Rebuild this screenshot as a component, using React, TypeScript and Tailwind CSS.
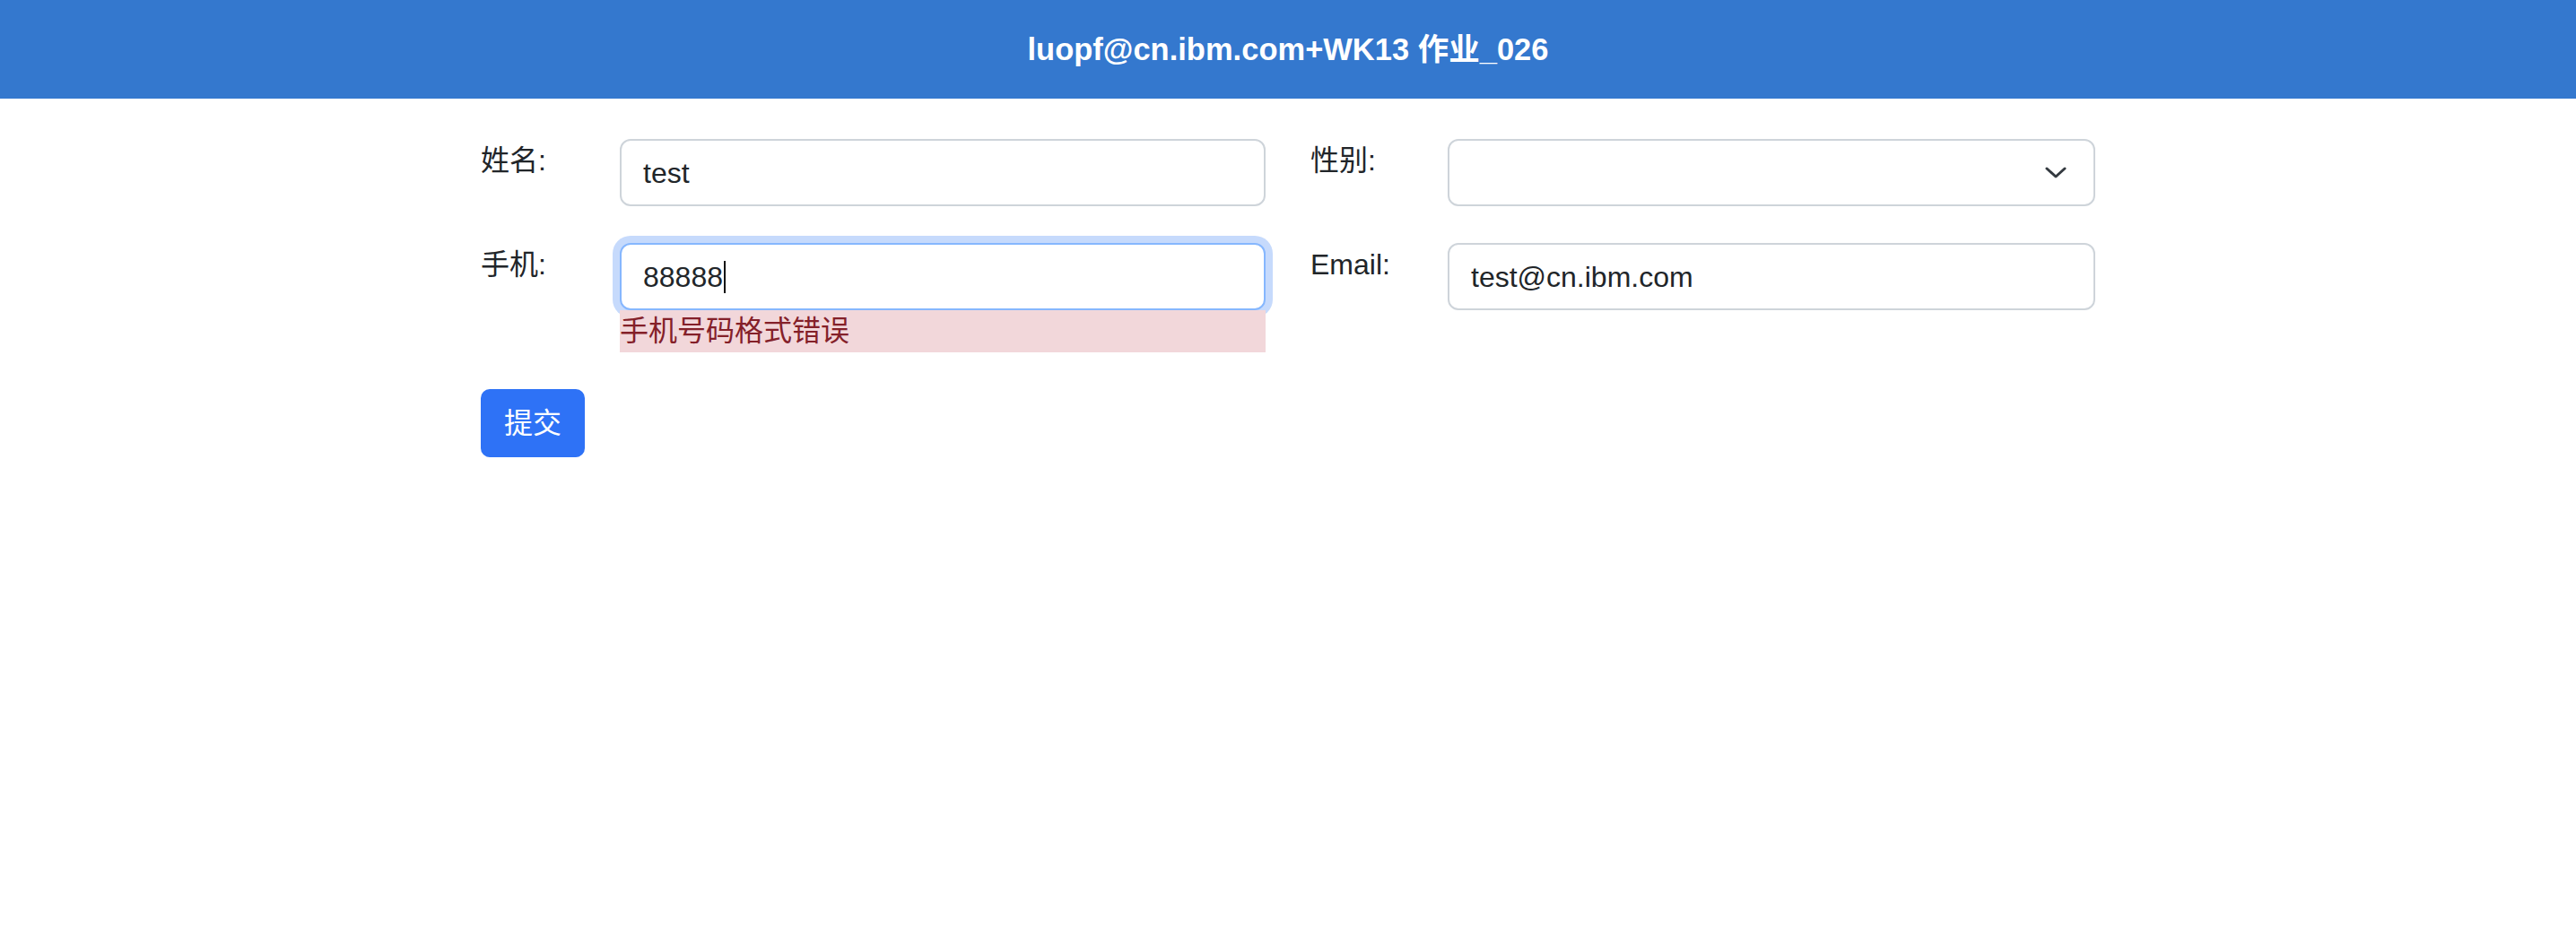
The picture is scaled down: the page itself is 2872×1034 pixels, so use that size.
import React from "react";

export default function App() {
  return (
    <div className="min-h-screen bg-white text-[#212529] font-['Liberation_Sans','Noto_Sans_CJK_SC',sans-serif]">
      <header className="h-[110px] bg-[#3478ce] flex items-center justify-center">
        <h1 className="text-white font-bold text-[34.5px] leading-none">luopf@cn.ibm.com+WK13 作业_026</h1>
      </header>
      <main className="w-[1800px] mx-auto pt-[45px]">
        <div className="grid grid-cols-2 gap-x-[50px] gap-y-[41px]">
          <div className="flex items-start">
            <label className="w-[155px] shrink-0 text-[32px] leading-[48px]">姓名:</label>
            <div className="flex-1">
              <div className="h-[75px] border-2 border-[#ced4da] rounded-[12px] px-[24px] text-[32px] flex items-center bg-white">
                test
              </div>
            </div>
          </div>
          <div className="flex items-start">
            <label className="w-[153px] shrink-0 text-[32px] leading-[48px]">性别:</label>
            <div className="flex-1">
              <div className="h-[75px] border-2 border-[#ced4da] rounded-[12px] pl-[24px] pr-[30px] text-[32px] flex items-center justify-end bg-white">
                <svg width="24" height="14" viewBox="0 0 24 14" fill="none">
                  <path d="M2 2 L12 11 L22 2" stroke="#343a40" strokeWidth="3" strokeLinecap="round" strokeLinejoin="round" />
                </svg>
              </div>
            </div>
          </div>
          <div className="flex items-start">
            <label className="w-[155px] shrink-0 text-[32px] leading-[48px]">手机:</label>
            <div className="flex-1">
              <div className="block h-[75px] border-2 border-[#86b7fe] rounded-[12px] px-[24px] text-[32px] flex items-center bg-white shadow-[0_0_0_8px_#c6dafc]">
                <span>88888</span>
                <span className="inline-block w-[2px] h-[36px] bg-[#111] ml-[1px]"></span>
              </div>
              <div className="relative h-[47px] bg-[#f2d7da] text-[#842029] text-[32px] leading-[47px]">
                手机号码格式错误
              </div>
            </div>
          </div>
          <div className="flex items-start">
            <label className="w-[153px] shrink-0 text-[32px] leading-[48px]">Email:</label>
            <div className="flex-1">
              <div className="h-[75px] border-2 border-[#ced4da] rounded-[12px] px-[24px] text-[32px] flex items-center bg-white">
                test@cn.ibm.com
              </div>
            </div>
          </div>
        </div>
        <button className="mt-[41px] w-[116px] h-[76px] rounded-[10px] bg-[#2e72f6] text-white text-[32px] flex items-center justify-center">
          提交
        </button>
      </main>
    </div>
  );
}
